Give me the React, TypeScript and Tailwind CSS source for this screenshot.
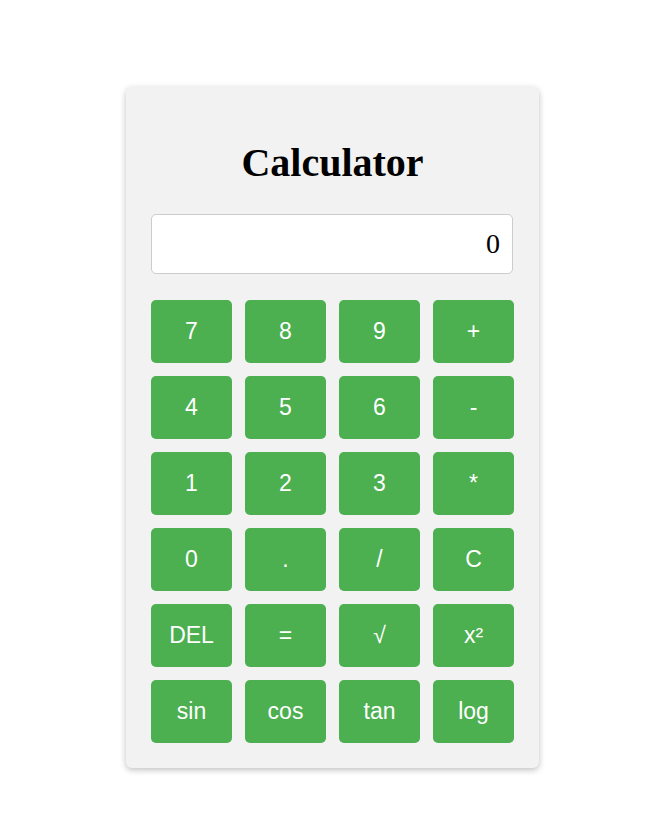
import React from "react";

const keys = [
  "7", "8", "9", "+",
  "4", "5", "6", "-",
  "1", "2", "3", "*",
  "0", ".", "/", "C",
  "DEL", "=", "√", "x²",
  "sin", "cos", "tan", "log",
];

export default function App() {
  return (
    <div className="min-h-[821px] w-full bg-white flex items-start pl-[126px] pt-[87px]">
      <div className="w-[413px] bg-[#f2f2f2] rounded-[6px] shadow-[0_2px_6px_rgba(0,0,0,0.25)] px-[25px] pt-[53px] pb-[25px] flex flex-col">
        <h1
          className="text-center text-[40px] leading-[46px] font-bold text-black mb-[28px]"
          style={{ fontFamily: '"Liberation Serif", "Times New Roman", serif' }}
        >
          Calculator
        </h1>
        <div
          className="w-[362px] h-[60px] bg-white border border-[#cccccc] rounded-[5px] flex items-center justify-end pr-[12px] text-[28px] text-black"
          style={{ fontFamily: '"Liberation Serif", "Times New Roman", serif' }}
        >
          0
        </div>
        <div className="mt-[26px] grid grid-cols-[repeat(4,81px)] auto-rows-[63px] gap-[13px]">
          {keys.map((k) => (
            <button
              key={k}
              className="bg-[#4caf50] text-white rounded-[5px] text-[23px] flex items-center justify-center"
              style={{ fontFamily: '"Liberation Sans", Arial, sans-serif' }}
            >
              {k}
            </button>
          ))}
        </div>
      </div>
    </div>
  );
}
